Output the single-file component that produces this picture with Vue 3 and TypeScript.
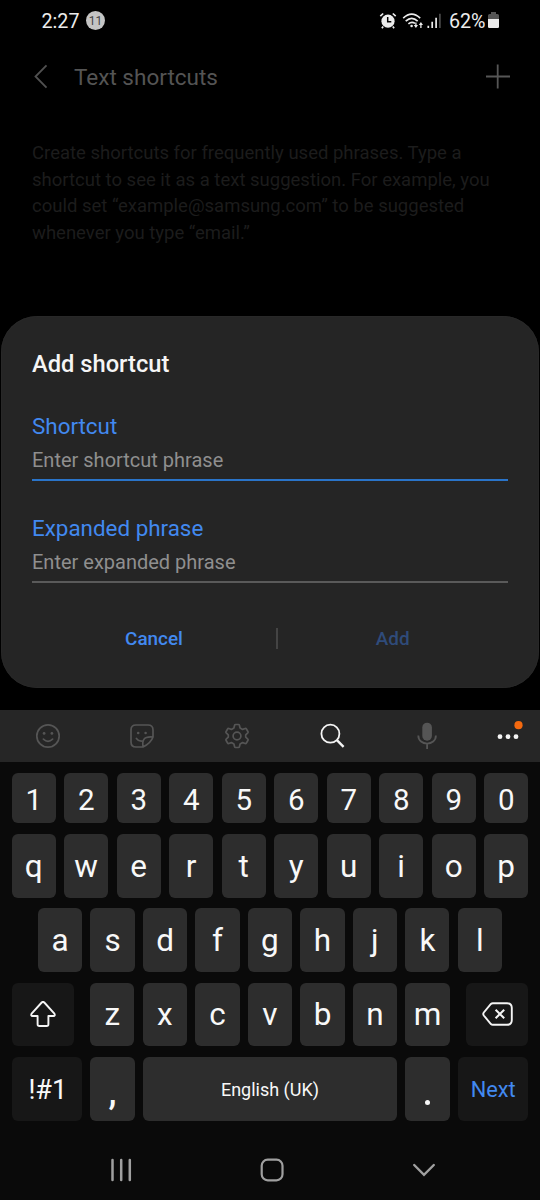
<script setup lang="ts">
const numberRow: string[] = '1234567890'.split('')
const topRow: string[] = 'qwertyuiop'.split('')
const homeRow: string[] = 'asdfghjkl'.split('')
const lowerRow: string[] = 'zxcvbnm'.split('')

interface Field {
  label: string
  placeholder: string
  focused: boolean
}

const fields: Field[] = [
  { label: 'Shortcut', placeholder: 'Enter shortcut phrase', focused: true },
  { label: 'Expanded phrase', placeholder: 'Enter expanded phrase', focused: false },
]

const description: string[] = [
  'Create shortcuts for frequently used phrases. Type a',
  'shortcut to see it as a text suggestion. For example, you',
  'could set “example@samsung.com” to be suggested',
  'whenever you type “email.”',
]
</script>

<template>
  <div class="screen">
    <header class="status">
      <span class="clock">2:27</span>
      <span class="count">11</span>
      <svg class="alarm" width="18" height="18" viewBox="0 0 18 18">
        <circle cx="9" cy="9.2" r="6.6" fill="#ececec" />
        <path d="M1.3 4.2 4.2 1.5M16.7 4.2 13.8 1.5M4.2 14.5 2.9 16.2M13.8 14.5l1.3 1.7" stroke="#ececec" stroke-width="1.7" fill="none" />
        <path d="M8.7 5v4.8h3.6" stroke="#000" stroke-width="1.5" fill="none" />
      </svg>
      <svg class="wifi" width="22" height="18" viewBox="0 0 22 18">
        <g fill="none" stroke="#ececec" stroke-width="1.6">
          <path d="M1.2 6.2Q9.7-1.8 18.2 6.2" />
          <path d="M3.7 9.2Q9.7 3.4 15.7 9.2" />
          <path d="M6.4 11.9Q9.7 9 13 11.4" />
        </g>
        <circle cx="9.6" cy="14" r="1.3" fill="#ececec" />
        <path d="M13.9 10.5v4M18.9 16v-4" stroke="#ececec" stroke-width="1.3" />
        <path d="M11.8 13h4.2l-2.1 3ZM16.8 13h4.2l-2.1-3Z" fill="#ececec" />
      </svg>
      <svg class="signal" width="15" height="16" viewBox="0 0 15 16">
        <path d="M1.3 12.8V15M5.2 8.7V15M9.1 4.8V15" stroke="#ececec" stroke-width="1.7" />
        <path d="M12.9.8V15" stroke="#555" stroke-width="1.5" />
      </svg>
      <span class="percent">62%</span>
      <svg class="battery" width="11" height="17" viewBox="0 0 11 17">
        <path d="M3 0h5v2h1.5q1.5 0 1.5 1.5V7H0V3.5Q0 2 1.5 2H3Z" fill="#555" />
        <path d="M0 7h11v7.7q0 1.3-1.3 1.3H1.3Q0 16 0 14.7Z" fill="#ececec" />
      </svg>
    </header>

    <nav class="appbar">
      <svg class="back" width="14" height="26" viewBox="0 0 14 26">
        <path d="M12.5 1.3 1.5 12.5l11 11.2" fill="none" stroke="#515151" stroke-width="1.8" />
      </svg>
      <h1>Text shortcuts</h1>
      <svg class="plus" width="26" height="26" viewBox="0 0 26 26">
        <path d="M1 12.5h24M12.7 .5v24" stroke="#565656" stroke-width="1.8" />
      </svg>
    </nav>

    <div class="description">
      <div v-for="line in description" :key="line">{{ line }}</div>
    </div>

    <section class="dialog">
      <h2>Add shortcut</h2>
      <div v-for="f in fields" :key="f.label" class="field" :class="{ focused: f.focused }">
        <label>{{ f.label }}</label>
        <div class="entry">{{ f.placeholder }}</div>
      </div>
      <div class="actions">
        <button class="cancel">Cancel</button>
        <i class="divider"></i>
        <button class="add">Add</button>
      </div>
    </section>

    <section class="keyboard">
      <div class="toolbar">
        <svg width="26" height="26" viewBox="0 0 26 26">
          <g fill="none" stroke="#555" stroke-width="1.7" stroke-linecap="round">
            <circle cx="13" cy="13" r="11.2" />
            <path d="M8.4 16.2q4.6 4.4 9.2 0" />
          </g>
          <circle cx="9.1" cy="10.4" r="1.4" fill="#555" /><circle cx="16.9" cy="10.4" r="1.4" fill="#555" />
        </svg>
        <svg width="26" height="26" viewBox="0 0 26 26">
          <g fill="none" stroke="#555" stroke-width="1.7" stroke-linecap="round" stroke-linejoin="round">
            <path d="M14 24H7Q2 24 2 19V7Q2 2 7 2H19Q24 2 24 7V14Q22 20 14 24ZM14 24Q13.2 18.5 15 16.2Q17 13.4 24 14" />
            <path d="M7.4 15.5Q9.5 18.5 13.2 18" />
          </g>
          <circle cx="9.2" cy="10" r="1.3" fill="#555" /><circle cx="16.6" cy="10" r="1.3" fill="#555" />
        </svg>
        <svg width="26" height="26" viewBox="0 0 26 26">
          <g fill="none" stroke="#555" stroke-width="1.7" stroke-linejoin="round">
            <path d="M11.6 1.5H14.4Q15.2 1.5 15.4 2.3L16.1 5L18.6 6.4L21.2 5.5Q22 5.3 22.4 6L24 8.7Q24.3 9.4 23.8 9.9L21.7 11.8V14.2L23.8 16.1Q24.3 16.6 24 17.3L22.4 20Q22 20.7 21.2 20.5L18.6 19.6L16.1 21L15.4 23.7Q15.2 24.5 14.4 24.5H11.6Q10.8 24.5 10.6 23.7L9.9 21L7.4 19.6L4.8 20.5Q4 20.7 3.6 20L2 17.3Q1.7 16.6 2.2 16.1L4.3 14.2V11.8L2.2 9.9Q1.7 9.4 2 8.7L3.6 6Q4 5.3 4.8 5.5L7.4 6.4L9.9 5L10.6 2.3Q10.8 1.5 11.6 1.5Z" />
            <circle cx="13" cy="13" r="3.9" />
          </g>
        </svg>
        <svg width="26" height="26" viewBox="0 0 26 26">
          <circle cx="11.4" cy="10.7" r="9" fill="none" stroke="#f5f5f5" stroke-width="1.8" />
          <path d="m17.9 17.2 6.7 6.7" stroke="#f5f5f5" stroke-width="2.4" />
        </svg>
        <svg width="26" height="28" viewBox="0 0 26 28">
          <rect x="8.3" y=".7" width="9.6" height="18" rx="4.8" fill="#555" />
          <path d="M4.3 13.5C4.3 24.2 21.9 24.2 21.9 13.5M13.1 21.5V27" fill="none" stroke="#555" stroke-width="1.8" />
        </svg>
        <svg class="more" width="26" height="32" viewBox="0 0 26 32">
          <g fill="#f5f5f5"><circle cx="5" cy="16.7" r="2.4" /><circle cx="13" cy="16.7" r="2.4" /><circle cx="21" cy="16.7" r="2.4" /></g>
          <circle cx="23.5" cy="5.2" r="4.1" fill="#f4690f" />
        </svg>
      </div>

      <div class="rows">
        <div class="row digits">
          <kbd v-for="k in numberRow" :key="k">{{ k }}</kbd>
        </div>
        <div class="row top">
          <kbd v-for="k in topRow" :key="k">{{ k }}</kbd>
        </div>
        <div class="row home">
          <kbd v-for="k in homeRow" :key="k">{{ k }}</kbd>
        </div>
        <div class="row lower">
          <kbd class="dark side">
            <svg width="26" height="26" viewBox="0 0 26 26">
              <path d="M11.7 1.5Q13 .3 14.3 1.5L24.4 12.6Q25.5 14.8 23.4 15H18.4V23.2Q18.4 25 16.6 25H9.4Q7.6 25 7.6 23.2V15H2.6Q.5 14.8 1.6 12.6Z" fill="none" stroke="#f5f5f5" stroke-width="1.9" stroke-linejoin="round" />
            </svg>
          </kbd>
          <div class="letters">
            <kbd v-for="k in lowerRow" :key="k">{{ k }}</kbd>
          </div>
          <kbd class="dark side">
            <svg width="31" height="24" viewBox="0 0 31 24">
              <path d="M10.8 1.2H25Q29.8 1.2 29.8 6V18Q29.8 22.8 25 22.8H10.8Q9.7 22.8 8.9 22L1.8 13.5Q.7 12 1.8 10.5L8.9 2Q9.7 1.2 10.8 1.2Z" fill="none" stroke="#f5f5f5" stroke-width="1.9" />
              <path d="m13.6 7.7 8.6 8.6M22.2 7.7l-8.6 8.6" stroke="#f5f5f5" stroke-width="2" />
            </svg>
          </kbd>
        </div>
        <div class="row bottom">
          <kbd class="dark symbols">!#1</kbd>
          <kbd class="comma">,</kbd>
          <kbd class="space">English (UK)</kbd>
          <kbd class="period"><i></i></kbd>
          <kbd class="dark next">Next</kbd>
        </div>
      </div>

      <div class="navbar">
        <svg width="24" height="24" viewBox="0 0 24 24">
          <path d="M3.5 2v20M12.2 2v20M20.8 2v20" stroke="#a0a0a0" stroke-width="2.5" stroke-linecap="round" />
        </svg>
        <svg width="24" height="24" viewBox="0 0 24 24">
          <rect x="1.7" y="1.7" width="20.8" height="20.6" rx="6" fill="none" stroke="#a0a0a0" stroke-width="2.2" />
        </svg>
        <svg width="24" height="24" viewBox="0 0 24 24">
          <path d="m2.2 7 9.8 9.8L21.8 7" fill="none" stroke="#a0a0a0" stroke-width="2.4" stroke-linecap="round" />
        </svg>
      </div>
    </section>
  </div>
</template>

<style>
body {
  margin: 0;
  background: #000;
}
</style>

<style scoped>
.screen {
  width: 540px;
  height: 1200px;
  overflow: hidden;
  background: #000;
  font-family: Roboto, "Liberation Sans", sans-serif;
  display: flex;
  flex-direction: column;
}
svg { display: block; flex: none; }
h1, h2 { margin: 0; }
.status {
  height: 40px;
  flex: none;
  box-sizing: border-box;
  display: flex;
  align-items: center;
  padding: 1px 41.5px 0;
  color: #ececec;
  font-size: 19.7px;
  white-space: nowrap;
}
.clock { width: 44.5px; padding-top: 1px; }
.count {
  width: 19px;
  height: 19px;
  margin-bottom: 1px;
  border-radius: 50%;
  background: #c4c4c4;
  color: #444;
  font-size: 12px;
  line-height: 20px;
  text-align: center;
}
.alarm { margin-left: auto; }
.wifi { margin-left: 5px; }
.signal { margin-left: 3px; }
.percent { margin-left: 7px; padding-top: 1px; }
.battery { margin: 0 0 1px 2px; }
.appbar {
  height: 74px;
  flex: none;
  display: flex;
  align-items: center;
  padding: 0 29px 0 34px;
}
h1 {
  font-size: 22.5px;
  font-weight: 400;
  color: #545454;
  margin-left: 26px;
}
.plus { margin-left: auto; }
.description {
  padding: 26px 32px 0;
  height: 176px;
  flex: none;
  font-size: 18.5px;
  line-height: 26.5px;
  color: #1c1c1c;
  white-space: nowrap;
}
.dialog {
  height: 372px;
  flex: none;
  box-sizing: border-box;
  margin: 0 1px 21.5px;
  padding: 32px 31px 0;
  border-radius: 36px;
  background: #252525;
  box-shadow: inset 0 0 0 1px #282828;
}
h2 {
  height: 34px;
  font-size: 23.7px;
  line-height: 33px;
  font-weight: 500;
  color: #f5f5f5;
}
.field { margin-top: 31px; height: 71px; }
.focused { margin-top: 28px; }
label {
  display: block;
  height: 34px;
  line-height: 33px;
  font-size: 22.4px;
  color: #4289f0;
}
.entry {
  height: 37px;
  box-sizing: border-box;
  line-height: 32px;
  font-size: 20px;
  color: #8f8f8f;
  border-bottom: 2px solid #5a5a5a;
}
.focused .entry { border-color: #2a74c9; }
.actions {
  display: flex;
  align-items: center;
  height: 40px;
  margin-top: 35.5px;
}
button {
  border: 0;
  padding: 0;
  background: none;
  font: 500 18.9px Roboto, sans-serif;
  color: #4289f0;
}
.cancel { width: 244px; }
.add { flex: 1; color: #2f4b7a; }
.divider { width: 1.5px; height: 21px; background: #444; }
.keyboard { flex: 1; background: #0a0a0a; }
.toolbar {
  height: 52.5px;
  display: flex;
  justify-content: space-between;
  align-items: center;
  padding: 0 19px 0 34.5px;
  box-sizing: border-box;
  background: #262626;
}
.more { overflow: visible; }
.toolbar svg:nth-child(5) { margin-right: -13.5px; }
.rows { padding: 11.3px 11.6px 0; }
.row {
  display: flex;
  justify-content: space-between;
  height: 63.7px;
  margin-bottom: 10.6px;
}
.home { padding: 0 26.4px; }
.letters {
  width: 359.4px;
  display: flex;
  justify-content: space-between;
}
kbd {
  width: 44.2px;
  box-sizing: border-box;
  display: flex;
  align-items: center;
  justify-content: center;
  border-radius: 6px;
  background: #2d2d2d;
  color: #f8f8f8;
  font: 400 31.5px Roboto, sans-serif;
}
.digits { height: 50.2px; }
.digits kbd { font-size: 29.5px; padding-top: 3px; }
.top kbd, .letters kbd { padding-top: 1px; }
.row .dark { background: #171717; }
.side { width: 62.3px; }
.row .symbols { width: 70.4px; font-size: 27px; padding: 2px 0 0 2px; }
.row .comma { padding-top: 6px; font-size: 36px; font-weight: 500; }
.row .space { width: 254px; font-size: 18px; padding-top: 2px; }
.row .period { padding-top: 27px; }
.period i { width: 5px; height: 5px; border-radius: 50%; background: #f8f8f8; }
.row .next { width: 70.4px; font-size: 21.8px; padding-top: 2px; color: #4289f0; }
.navbar {
  display: flex;
  justify-content: space-between;
  padding: 27px 104.5px 0 109px;
}
</style>
